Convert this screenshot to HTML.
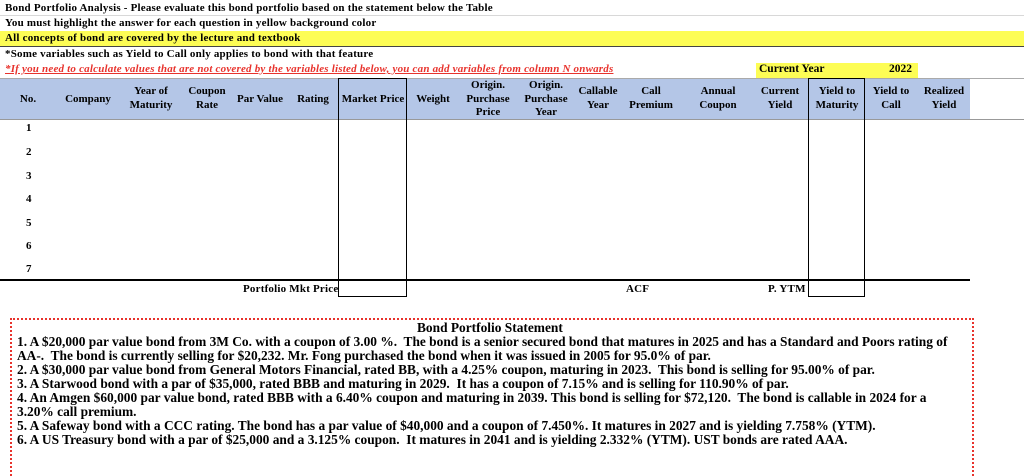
<!DOCTYPE html>
<html style="overflow:hidden;height:476px"><head><style>
html,body{overflow:hidden}
body{margin:0;width:1024px;height:476px;background:#fff;position:relative;overflow:hidden;font-family:"Liberation Serif",serif;font-weight:bold;color:#000}
.a{position:absolute;white-space:nowrap}
.t{font-size:11px;letter-spacing:0.2px}
.h{font-size:11px;text-align:center;line-height:13.5px}
.s{font-size:13.4px;line-height:14px}
</style></head><body>
<div class="a" style="left:0;top:15px;width:1024px;height:1px;background:#d8d8d8"></div>
<div class="a t" style="left:5px;top:2px">Bond Portfolio Analysis - Please evaluate this bond portfolio based on the statement below the Table</div>
<div class="a t" style="left:5px;top:17px">You must highlight the answer for each question in yellow background color</div>
<div class="a" style="left:0;top:31px;width:1024px;height:15px;background:#fdfd55"></div>
<div class="a t" style="left:5px;top:32px">All concepts of bond are covered by the lecture and textbook</div>
<div class="a" style="left:0;top:46px;width:1024px;height:1px;background:#444"></div>
<div class="a t" style="left:5px;top:48px">*Some variables such as Yield to Call only applies to bond with that feature</div>
<div class="a t" style="left:5px;top:63px;color:#e8322c;font-style:italic;text-decoration:underline">*If you need to calculate values that are not covered by the variables listed below, you can add variables from column N onwards</div>
<div class="a" style="left:756px;top:63px;width:162px;height:15px;background:#fdfd55"></div>
<div class="a" style="left:759px;top:63px;font-size:11.5px">Current Year</div>
<div class="a" style="left:889px;top:63px;font-size:11.5px">2022</div>
<div class="a" style="left:0;top:78px;width:1024px;height:1px;background:#aaa"></div>
<div class="a" style="left:0;top:79px;width:970px;height:40px;background:#b4c6e7"></div>
<div class="a" style="left:0;top:119px;width:1024px;height:1px;background:#999"></div>
<div class="a h" style="left:10px;top:93px;width:36px">No.</div>
<div class="a h" style="left:58px;top:93px;width:60px">Company</div>
<div class="a h" style="left:124px;top:85px;width:54px">Year of<br>Maturity</div>
<div class="a h" style="left:180px;top:85px;width:54px">Coupon<br>Rate</div>
<div class="a h" style="left:232px;top:93px;width:56px">Par Value</div>
<div class="a h" style="left:288px;top:93px;width:50px">Rating</div>
<div class="a h" style="left:338px;top:93px;width:70px">Market Price</div>
<div class="a h" style="left:408px;top:93px;width:50px">Weight</div>
<div class="a h" style="left:458px;top:79px;width:60px">Origin.<br>Purchase<br>Price</div>
<div class="a h" style="left:516px;top:79px;width:60px">Origin.<br>Purchase<br>Year</div>
<div class="a h" style="left:570px;top:85px;width:56px">Callable<br>Year</div>
<div class="a h" style="left:622px;top:85px;width:58px">Call<br>Premium</div>
<div class="a h" style="left:688px;top:85px;width:60px">Annual<br>Coupon</div>
<div class="a h" style="left:752px;top:85px;width:56px">Current<br>Yield</div>
<div class="a h" style="left:808px;top:85px;width:58px">Yield to<br>Maturity</div>
<div class="a h" style="left:864px;top:85px;width:54px">Yield to<br>Call</div>
<div class="a h" style="left:916px;top:85px;width:56px">Realized<br>Yield</div>
<div class="a t" style="left:26px;top:122px">1</div>
<div class="a t" style="left:26px;top:146px">2</div>
<div class="a t" style="left:26px;top:170px">3</div>
<div class="a t" style="left:26px;top:193px">4</div>
<div class="a t" style="left:26px;top:217px">5</div>
<div class="a t" style="left:26px;top:240px">6</div>
<div class="a t" style="left:26px;top:263px">7</div>
<div class="a" style="left:0;top:279px;width:970px;height:1.5px;background:#000"></div>
<div class="a" style="left:338px;top:78px;width:67px;height:217px;border:1.5px solid #000"></div>
<div class="a" style="left:808px;top:78px;width:55px;height:217px;border:1.5px solid #000"></div>
<div class="a t" style="left:243px;top:283px">Portfolio Mkt Price</div>
<div class="a t" style="left:626px;top:283px">ACF</div>
<div class="a t" style="left:768px;top:283px">P. YTM</div>
<div class="a" style="left:10px;top:318px;width:960px;height:170px;border:2px dotted #e8322c"></div>
<div class="a s" style="left:417px;top:321px">Bond Portfolio Statement</div>
<div class="a s" style="left:17px;top:335px">1. A $20,000 par value bond from 3M Co. with a coupon of 3.00 %.&nbsp; The bond is a senior secured bond that matures in 2025 and has a Standard and Poors rating of</div>
<div class="a s" style="left:17px;top:349px">AA-.&nbsp; The bond is currently selling for $20,232. Mr. Fong purchased the bond when it was issued in 2005 for 95.0% of par.</div>
<div class="a s" style="left:17px;top:363px">2. A $30,000 par value bond from General Motors Financial, rated BB, with a 4.25% coupon, maturing in 2023.&nbsp; This bond is selling for 95.00% of par.</div>
<div class="a s" style="left:17px;top:377px">3. A Starwood bond with a par of $35,000, rated BBB and maturing in 2029.&nbsp; It has a coupon of 7.15% and is selling for 110.90% of par.</div>
<div class="a s" style="left:17px;top:391px">4. An Amgen $60,000 par value bond, rated BBB with a 6.40% coupon and maturing in 2039. This bond is selling for $72,120.&nbsp; The bond is callable in 2024 for a</div>
<div class="a s" style="left:17px;top:405px">3.20% call premium.</div>
<div class="a s" style="left:17px;top:419px">5. A Safeway bond with a CCC rating. The bond has a par value of $40,000 and a coupon of 7.450%. It matures in 2027 and is yielding 7.758% (YTM).</div>
<div class="a s" style="left:17px;top:433px">6. A US Treasury bond with a par of $25,000 and a 3.125% coupon.&nbsp; It matures in 2041 and is yielding 2.332% (YTM). UST bonds are rated AAA.</div>
</body></html>
